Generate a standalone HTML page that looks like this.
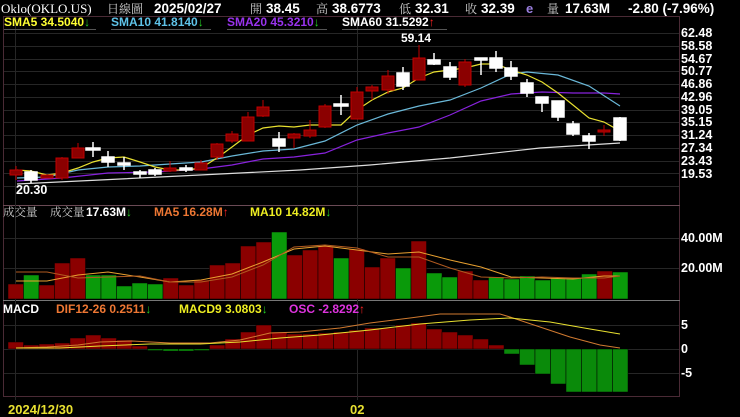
<!DOCTYPE html>
<html><head><meta charset="utf-8"><style>
html,body{margin:0;padding:0;background:#000;width:740px;height:417px;overflow:hidden}
svg{display:block}
text{font-family:"Liberation Sans","Noto Sans CJK TC",sans-serif;font-weight:bold}
.ax{fill:#fff;font-size:12.5px}
.cj{font-family:"Liberation Serif","Noto Serif CJK SC",serif;font-weight:normal}
</style></head><body>
<svg width="740" height="417" viewBox="0 0 740 417">
<rect width="740" height="417" fill="#000"/>
<!-- header -->
<text x="1" y="13" fill="#fff" font-size="13" style="font-weight:normal;font-family:'Liberation Serif',serif">Oklo(OKLO.US)</text>
<text x="107" y="13" fill="#ccc" font-size="12" class="cj">日線圖</text>
<text x="154" y="13" fill="#fff" font-size="13.5">2025/02/27</text>
<text x="250" y="13" fill="#ccc" font-size="12" class="cj">開</text>
<text x="266" y="13" fill="#fff" font-size="13.5">38.45</text>
<text x="316" y="13" fill="#ccc" font-size="12" class="cj">高</text>
<text x="332" y="13" fill="#fff" font-size="13.5">38.6773</text>
<text x="399" y="13" fill="#ccc" font-size="12" class="cj">低</text>
<text x="415" y="13" fill="#fff" font-size="13.5">32.31</text>
<text x="465" y="13" fill="#ccc" font-size="12" class="cj">收</text>
<text x="481" y="13" fill="#fff" font-size="13.5">32.39</text>
<text x="526" y="13" fill="#9b7fe0" font-size="13">e</text>
<text x="547" y="13" fill="#ccc" font-size="12" class="cj">量</text>
<text x="565" y="13" fill="#fff" font-size="13.5">17.63M</text>
<text x="628" y="13" fill="#fff" font-size="13.5">-2.80 (-7.96%)</text>
<!-- frame -->
<g stroke="#4a2a35" stroke-width="1" fill="none">
<rect x="3.5" y="16.5" width="676" height="380"/>
<line x1="3" y1="205.5" x2="680" y2="205.5" stroke="#6a4a55"/>
<line x1="3" y1="300.5" x2="680" y2="300.5" stroke="#777"/>
</g>
<!-- grid -->
<g stroke="#262626" stroke-width="1">
<line x1="4" y1="33.5" x2="679" y2="33.5"/><line x1="4" y1="46.5" x2="679" y2="46.5"/><line x1="4" y1="59.5" x2="679" y2="59.5"/><line x1="4" y1="71.5" x2="679" y2="71.5"/><line x1="4" y1="84.5" x2="679" y2="84.5"/><line x1="4" y1="97.5" x2="679" y2="97.5"/><line x1="4" y1="110.5" x2="679" y2="110.5"/><line x1="4" y1="122.5" x2="679" y2="122.5"/><line x1="4" y1="135.5" x2="679" y2="135.5"/><line x1="4" y1="148.5" x2="679" y2="148.5"/><line x1="4" y1="161.5" x2="679" y2="161.5"/><line x1="4" y1="173.5" x2="679" y2="173.5"/><line x1="4" y1="186.5" x2="679" y2="186.5"/>
<line x1="4" y1="238.5" x2="679" y2="238.5"/><line x1="4" y1="268.5" x2="679" y2="268.5"/>
<line x1="4" y1="325.5" x2="679" y2="325.5"/><line x1="4" y1="349.5" x2="679" y2="349.5"/><line x1="4" y1="373.5" x2="679" y2="373.5"/>
<line x1="15.5" y1="17" x2="15.5" y2="400"/><line x1="357.5" y1="17" x2="357.5" y2="400"/>
</g>
<!-- axis labels -->
<g class="ax">
<text x="681" y="37">62.48</text><text x="681" y="50">58.58</text><text x="681" y="63">54.67</text><text x="681" y="75">50.77</text><text x="681" y="88">46.86</text><text x="681" y="101">42.96</text><text x="681" y="114">39.05</text><text x="681" y="126">35.15</text><text x="681" y="139">31.24</text><text x="681" y="152">27.34</text><text x="681" y="165">23.43</text><text x="681" y="178">19.53</text>
<text x="681" y="242">40.00M</text><text x="681" y="272">20.00M</text>
<text x="681" y="329">5</text><text x="681" y="353">0</text><text x="681" y="377">-5</text>
</g>
<!-- legend -->
<g font-size="12">
<text x="4" y="26" fill="#ffff33">SMA5 34.5040<tspan fill="#22cc22">↓</tspan></text>
<text x="111" y="26" fill="#5fc3e8">SMA10 41.8140<tspan fill="#22cc22">↓</tspan></text>
<text x="227" y="26" fill="#9933ee">SMA20 45.3210<tspan fill="#22cc22">↓</tspan></text>
<text x="342" y="26" fill="#fff">SMA60 31.5292<tspan fill="#ff2222">↑</tspan></text>
<text x="401" y="42" fill="#fff">59.14</text>
<text x="16" y="194" fill="#fff" font-size="12.5">20.30</text>
</g>
<g stroke="#555" stroke-width="1"><line x1="4" y1="29.5" x2="96" y2="29.5"/><line x1="111" y1="29.5" x2="211" y2="29.5"/><line x1="227" y1="29.5" x2="327" y2="29.5"/><line x1="342" y1="29.5" x2="447" y2="29.5"/></g>
<!-- MAs -->
<polyline fill="none" stroke="#ddd" stroke-width="1.2" points="17,184 100,180 200,175 300,170 370,165 450,158 540,148 620,143"/>
<polyline fill="none" stroke="#8822dd" stroke-width="1.2" points="17,181 62,178 108,173 155,172 201,169 232,165 263,159 294,157 325,153 357,140 388,133 419,127 450,115 481,101 511,94 542,92 573,93 604,93 620,94"/>
<polyline fill="none" stroke="#6ab8d8" stroke-width="1.2" points="17,178 47,177 78,170 108,167 140,166 170,164 201,162 232,156 263,151 294,149 325,141 357,125 388,114 419,106 450,100 481,88 511,74 527,72 558,75 589,86 620,106"/>
<polyline fill="none" stroke="#e8e030" stroke-width="1.2" points="17,170 31,171 47,175 62,173 78,168 93,162 108,158 124,157 140,162 155,167 170,170 186,170 201,168 217,158 232,147 248,135 263,128 279,126 294,127 310,125 325,125 341,125 357,110 372,100 388,92 403,88 419,78 434,72 450,70 465,68 481,64 496,64 511,70 527,75 542,82 558,93 573,105 589,118 604,122 620,131"/>
<!-- candles: red -->
<g fill="#8b0000" stroke="#c00000" stroke-width="1">
<line x1="16" y1="166" x2="16" y2="180"/><rect x="10" y="170" width="12" height="5"/>
<rect x="41" y="175" width="12" height="3"/>
<line x1="62" y1="157" x2="62" y2="180"/><rect x="56" y="158" width="12" height="20"/>
<line x1="78" y1="143" x2="78" y2="158"/><rect x="72" y="148" width="12" height="10"/>
<line x1="170" y1="161" x2="170" y2="172"/><rect x="164" y="168" width="12" height="3"/>
<line x1="201" y1="160" x2="201" y2="170"/><rect x="195" y="163" width="12" height="7"/>
<line x1="217" y1="143" x2="217" y2="160"/><rect x="211" y="144" width="12" height="13"/>
<line x1="232" y1="131" x2="232" y2="143"/><rect x="226" y="134" width="12" height="7"/>
<line x1="248" y1="112" x2="248" y2="141"/><rect x="242" y="117" width="12" height="24"/>
<line x1="263" y1="100" x2="263" y2="117"/><rect x="257" y="107" width="12" height="9"/>
<line x1="294" y1="133" x2="294" y2="148"/><rect x="288" y="134" width="12" height="4"/>
<line x1="310" y1="120" x2="310" y2="138"/><rect x="304" y="130" width="12" height="6"/>
<line x1="325" y1="104" x2="325" y2="128"/><rect x="319" y="106" width="12" height="21"/>
<line x1="357" y1="87" x2="357" y2="119"/><rect x="351" y="92" width="12" height="27"/>
<line x1="372" y1="85" x2="372" y2="100"/><rect x="366" y="87" width="12" height="4"/>
<line x1="388" y1="70" x2="388" y2="94"/><rect x="382" y="76" width="12" height="14"/>
<line x1="419" y1="45" x2="419" y2="80"/><rect x="413" y="58" width="12" height="22"/>
<line x1="465" y1="59" x2="465" y2="87"/><rect x="459" y="62" width="12" height="23"/>
<line x1="604" y1="125" x2="604" y2="136"/><rect x="598" y="130" width="12" height="2"/>
</g>
<!-- candles: white -->
<g fill="#fff" stroke="#fff" stroke-width="1.5">
<line x1="31" y1="170" x2="31" y2="183"/><rect x="25" y="172" width="12" height="8"/>
<line x1="93" y1="142" x2="93" y2="157"/><rect x="86" y="148" width="14" height="2"/>
<line x1="108" y1="151" x2="108" y2="167"/><rect x="102" y="157" width="12" height="5"/>
<line x1="124" y1="157" x2="124" y2="170"/><rect x="118" y="163" width="12" height="2"/>
<line x1="140" y1="170" x2="140" y2="178"/><rect x="134" y="172" width="12" height="2"/>
<line x1="155" y1="168" x2="155" y2="176"/><rect x="149" y="170" width="12" height="4"/>
<line x1="186" y1="165" x2="186" y2="172"/><rect x="180" y="168" width="12" height="2"/>
<line x1="279" y1="132" x2="279" y2="152"/><rect x="273" y="139" width="12" height="7"/>
<line x1="341" y1="95" x2="341" y2="115"/><rect x="334" y="104" width="14" height="2"/>
<line x1="403" y1="67" x2="403" y2="90"/><rect x="397" y="73" width="12" height="13"/>
<line x1="434" y1="53" x2="434" y2="65"/><rect x="428" y="60" width="12" height="4"/>
<line x1="450" y1="62" x2="450" y2="80"/><rect x="444" y="67" width="12" height="10"/>
<line x1="481" y1="59" x2="481" y2="75"/><rect x="475" y="58" width="12" height="2"/>
<line x1="496" y1="51" x2="496" y2="72"/><rect x="490" y="58" width="12" height="10"/>
<line x1="511" y1="61" x2="511" y2="80"/><rect x="505" y="68" width="12" height="8"/>
<line x1="527" y1="79" x2="527" y2="97"/><rect x="521" y="83" width="12" height="10"/>
<line x1="542" y1="97" x2="542" y2="112"/><rect x="536" y="97" width="12" height="6"/>
<line x1="558" y1="101" x2="558" y2="121"/><rect x="552" y="101" width="12" height="16"/>
<line x1="573" y1="121" x2="573" y2="136"/><rect x="567" y="124" width="12" height="10"/>
<line x1="589" y1="133" x2="589" y2="149"/><rect x="583" y="136" width="12" height="5"/>
<line x1="620" y1="117" x2="620" y2="141"/><rect x="614" y="118" width="12" height="22"/>
</g>
<!-- volume legend -->
<text x="3" y="216" fill="#ccc" font-size="11.5" class="cj">成交量</text>
<text x="50" y="216" fill="#ccc" font-size="11.5" class="cj">成交量</text>
<g font-size="12">
<text x="86" y="216" fill="#fff">17.63M<tspan fill="#22cc22">↓</tspan></text>
<text x="154" y="216" fill="#ee7733">MA5 16.28M<tspan fill="#ff2222">↑</tspan></text>
<text x="250" y="216" fill="#eeee22">MA10 14.82M<tspan fill="#22cc22">↓</tspan></text>
<text x="3" y="313" fill="#fff">MACD</text>
<text x="56" y="313" fill="#ee7733">DIF12-26 0.2511<tspan fill="#22cc22">↓</tspan></text>
<text x="179" y="313" fill="#eeee22">MACD9 3.0803<tspan fill="#22cc22">↓</tspan></text>
<text x="289" y="313" fill="#dd33dd">OSC -2.8292<tspan fill="#ff2222">↑</tspan></text>
<text x="8" y="414" fill="#e8e030" font-weight="normal" font-size="13">2024/12/30</text>
<text x="350" y="414" fill="#e8e030" font-weight="normal" font-size="13">02</text>
</g>
<!-- volume bars -->
<g stroke="#000" stroke-width="0.5">
<rect x="8" y="284" width="15.5" height="15" fill="#8b0000"/>
<rect x="23.5" y="275" width="15.5" height="24" fill="#0a9a0a"/>
<rect x="39" y="285" width="15.5" height="14" fill="#8b0000"/>
<rect x="54.5" y="263" width="15.5" height="36" fill="#8b0000"/>
<rect x="70" y="258" width="15.5" height="41" fill="#8b0000"/>
<rect x="85.5" y="275" width="15.5" height="24" fill="#0a9a0a"/>
<rect x="101" y="275" width="15.5" height="24" fill="#0a9a0a"/>
<rect x="116.5" y="286" width="15.5" height="13" fill="#0a9a0a"/>
<rect x="132" y="283" width="15.5" height="16" fill="#0a9a0a"/>
<rect x="147.5" y="284" width="15.5" height="15" fill="#0a9a0a"/>
<rect x="163" y="278" width="15.5" height="21" fill="#8b0000"/>
<rect x="178.5" y="285" width="15.5" height="14" fill="#8b0000"/>
<rect x="194" y="280" width="15.5" height="19" fill="#8b0000"/>
<rect x="209.5" y="265" width="15.5" height="34" fill="#8b0000"/>
<rect x="225" y="263" width="15.5" height="36" fill="#8b0000"/>
<rect x="240.5" y="246" width="15.5" height="53" fill="#8b0000"/>
<rect x="256" y="242" width="15.5" height="57" fill="#8b0000"/>
<rect x="271.5" y="232" width="15.5" height="67" fill="#0a9a0a"/>
<rect x="287" y="255" width="15.5" height="44" fill="#8b0000"/>
<rect x="302.5" y="250" width="15.5" height="49" fill="#8b0000"/>
<rect x="318" y="246" width="15.5" height="53" fill="#8b0000"/>
<rect x="333.5" y="258" width="15.5" height="41" fill="#0a9a0a"/>
<rect x="349" y="249" width="15.5" height="50" fill="#8b0000"/>
<rect x="364.5" y="267" width="15.5" height="32" fill="#8b0000"/>
<rect x="380" y="258" width="15.5" height="41" fill="#8b0000"/>
<rect x="395.5" y="268" width="15.5" height="31" fill="#0a9a0a"/>
<rect x="411" y="241" width="15.5" height="58" fill="#8b0000"/>
<rect x="426.5" y="273" width="15.5" height="26" fill="#0a9a0a"/>
<rect x="442" y="277" width="15.5" height="22" fill="#0a9a0a"/>
<rect x="457.5" y="271" width="15.5" height="28" fill="#8b0000"/>
<rect x="473" y="280" width="15.5" height="19" fill="#8b0000"/>
<rect x="488.5" y="277" width="15.5" height="22" fill="#0a9a0a"/>
<rect x="504" y="279" width="15.5" height="20" fill="#0a9a0a"/>
<rect x="519.5" y="276" width="15.5" height="23" fill="#0a9a0a"/>
<rect x="535" y="280" width="15.5" height="19" fill="#0a9a0a"/>
<rect x="550.5" y="278" width="15.5" height="21" fill="#0a9a0a"/>
<rect x="566" y="278" width="15.5" height="21" fill="#0a9a0a"/>
<rect x="581.5" y="274" width="15.5" height="25" fill="#0a9a0a"/>
<rect x="597" y="271" width="15.5" height="28" fill="#8b0000"/>
<rect x="612.5" y="272" width="15.5" height="27" fill="#0a9a0a"/>
</g>
<polyline fill="none" stroke="#e8a030" stroke-width="1" points="16,281 47,281 78,275 108,272 140,277 170,282 201,280 232,274 263,262 294,249 325,246 357,250 388,254 419,252 450,260 481,267 511,277 542,278 573,279 604,276 620,276"/>
<polyline fill="none" stroke="#b05a20" stroke-width="1" points="16,272 47,272 78,278 108,277 140,276 170,282 201,282 232,277 263,265 294,247 325,245 357,248 388,257 419,257 450,268 481,277 511,278 542,277 573,278 604,278 620,276"/>
<!-- MACD hist -->
<g stroke="#000" stroke-width="0.5">
<rect x="8" y="342" width="15.5" height="7" fill="#8b0000"/>
<rect x="23.5" y="345" width="15.5" height="4" fill="#8b0000"/>
<rect x="39" y="344" width="15.5" height="5" fill="#8b0000"/>
<rect x="54.5" y="343" width="15.5" height="6" fill="#8b0000"/>
<rect x="70" y="338" width="15.5" height="11" fill="#8b0000"/>
<rect x="85.5" y="335" width="15.5" height="14" fill="#8b0000"/>
<rect x="101" y="338" width="15.5" height="11" fill="#8b0000"/>
<rect x="116.5" y="340" width="15.5" height="9" fill="#8b0000"/>
<rect x="132" y="346" width="15.5" height="3" fill="#8b0000"/>
<rect x="147.5" y="349" width="15.5" height="1.5" fill="#0a9a0a"/>
<rect x="163" y="349" width="15.5" height="2" fill="#0a9a0a"/>
<rect x="178.5" y="349" width="15.5" height="2" fill="#0a9a0a"/>
<rect x="194" y="349" width="15.5" height="1.5" fill="#0a9a0a"/>
<rect x="209.5" y="345" width="15.5" height="4" fill="#8b0000"/>
<rect x="225" y="339" width="15.5" height="10" fill="#8b0000"/>
<rect x="240.5" y="332" width="15.5" height="17" fill="#8b0000"/>
<rect x="256" y="325" width="15.5" height="24" fill="#8b0000"/>
<rect x="271.5" y="332" width="15.5" height="17" fill="#8b0000"/>
<rect x="287" y="334" width="15.5" height="15" fill="#8b0000"/>
<rect x="302.5" y="334" width="15.5" height="15" fill="#8b0000"/>
<rect x="318" y="333" width="15.5" height="16" fill="#8b0000"/>
<rect x="333.5" y="332" width="15.5" height="17" fill="#8b0000"/>
<rect x="349" y="330" width="15.5" height="19" fill="#8b0000"/>
<rect x="364.5" y="328" width="15.5" height="21" fill="#8b0000"/>
<rect x="380" y="328" width="15.5" height="21" fill="#8b0000"/>
<rect x="395.5" y="325" width="15.5" height="24" fill="#8b0000"/>
<rect x="411" y="323" width="15.5" height="26" fill="#8b0000"/>
<rect x="426.5" y="329" width="15.5" height="20" fill="#8b0000"/>
<rect x="442" y="332" width="15.5" height="17" fill="#8b0000"/>
<rect x="457.5" y="335" width="15.5" height="14" fill="#8b0000"/>
<rect x="473" y="339" width="15.5" height="10" fill="#8b0000"/>
<rect x="488.5" y="345" width="15.5" height="4" fill="#8b0000"/>
<rect x="504" y="349" width="15.5" height="5" fill="#0a8a0a"/>
<rect x="519.5" y="349" width="15.5" height="16" fill="#0a8a0a"/>
<rect x="535" y="349" width="15.5" height="25" fill="#0a8a0a"/>
<rect x="550.5" y="349" width="15.5" height="35" fill="#0a8a0a"/>
<rect x="566" y="349" width="15.5" height="43" fill="#0a8a0a"/>
<rect x="581.5" y="349" width="15.5" height="43" fill="#0a8a0a"/>
<rect x="597" y="349" width="15.5" height="43" fill="#0a8a0a"/>
<rect x="612.5" y="349" width="15.5" height="43" fill="#0a8a0a"/>
</g>
<polyline fill="none" stroke="#d07a30" stroke-width="1" points="16,348 47,347 78,345 100,342 132,341 170,343 210,343 240,340 270,333 300,332 340,328 370,323 410,318 440,314 500,314 510,317 540,327 570,337 600,345 620,348"/>
<polyline fill="none" stroke="#e8e030" stroke-width="1" points="16,348 60,348 100,346 150,344 200,344 240,342 280,338 320,335 370,330 420,324 470,320 510,318 550,322 590,329 620,334"/>
</svg>
</body></html>
